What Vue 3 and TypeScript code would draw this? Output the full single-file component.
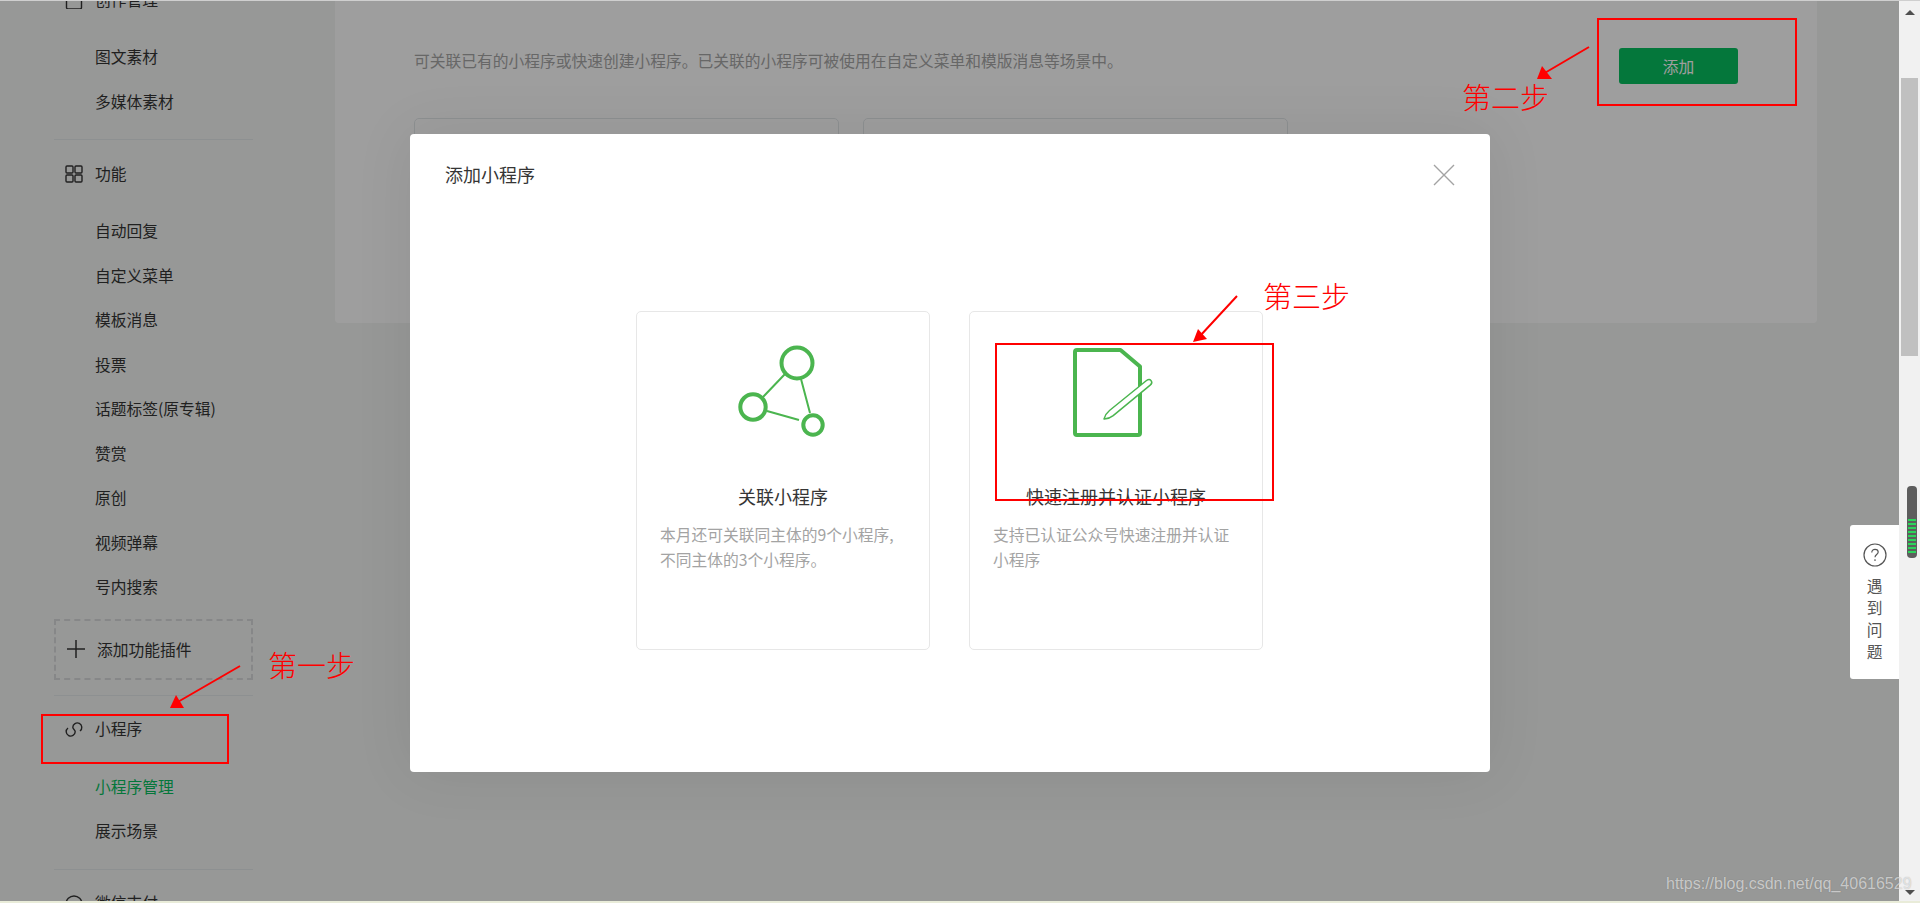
<script setup lang="ts">
interface MenuGroup {
  title: string
  icon: string
  items: string[]
  plugin?: boolean
}

const groups: MenuGroup[] = [
  { title: '创作管理', icon: 'doc', items: ['图文素材', '多媒体素材'] },
  {
    title: '功能',
    icon: 'grid',
    items: ['自动回复', '自定义菜单', '模板消息', '投票', '话题标签(原专辑)', '赞赏', '原创', '视频弹幕', '号内搜索'],
    plugin: true
  },
  { title: '小程序', icon: 'mini', items: ['小程序管理', '展示场景'] },
  { title: '微信支付', icon: 'pay', items: [] }
]

const stripes = [0, 1, 2, 3, 4, 5, 6, 7, 8]
const helpChars = ['遇', '到', '问', '题']
</script>

<template>
  <div class="page">
    <div class="top-line"></div>
    <div class="body">
      <div class="viewport">
        <aside class="sidebar">
          <section v-for="group in groups" :key="group.title" class="group">
            <div class="group-title">
              <svg class="group-icon" width="18" height="18" viewBox="0 0 18 18" fill="none" stroke="#353535" stroke-width="1.4">
                <template v-if="group.icon === 'doc'">
                  <rect x="1.5" y="0" width="15" height="18" rx="1.5" />
                  <path d="M7 9h4" />
                </template>
                <template v-else-if="group.icon === 'grid'">
                  <rect x="1" y="1" width="7" height="7" rx="1" />
                  <rect x="10" y="1" width="7" height="7" rx="1" />
                  <rect x="1" y="10" width="7" height="7" rx="1" />
                  <rect x="10" y="10" width="7" height="7" rx="1" />
                </template>
                <template v-else-if="group.icon === 'mini'">
                  <path d="M3 7A4.5 4.5 0 1 0 10.200 10.700C10.200 9 7.800 8 7.800 6.300A4.500 4.500 0 1 1 15 10" />
                </template>
                <template v-else>
                  <circle cx="9" cy="9" r="8" />
                  <path d="M5.500 9l2.500 2.500 5-5" />
                </template>
              </svg>
              <span>{{ group.title }}</span>
            </div>
            <a
              v-for="item in group.items"
              :key="item"
              class="menu-item"
              :class="{ active: item === '小程序管理' }"
            >{{ item }}</a>
            <div v-if="group.plugin" class="plugin">
              <svg width="18" height="18" viewBox="0 0 18 18" stroke="#353535" stroke-width="1.500">
                <path d="M0 9h18M9 0v18" />
              </svg>
              <span>添加功能插件</span>
            </div>
          </section>
        </aside>

        <main class="panel">
          <div class="panel-head">
            <p class="panel-desc">可关联已有的小程序或快速创建小程序。已关联的小程序可被使用在自定义菜单和模版消息等场景中。</p>
            <button class="add-btn">添加</button>
          </div>
          <div class="panel-cards">
            <div class="panel-card"></div>
            <div class="panel-card"></div>
          </div>
        </main>

        <div class="help">
          <svg width="24" height="24" viewBox="0 0 24 24" fill="none" stroke="#555" stroke-width="1.200">
            <circle cx="12" cy="12" r="11" />
            <path d="M8.800 9.400c0-1.900 1.400-3.100 3.200-3.100s3.200 1.100 3.200 2.800c0 2.400-3.200 2.500-3.200 5.100" />
            <path d="M12 16.300v1.800" />
          </svg>
          <div class="help-text">
            <span v-for="ch in helpChars" :key="ch">{{ ch }}</span>
          </div>
        </div>

        <div class="mask">
          <div class="modal">
            <header class="modal-head">
              <h2 class="modal-title">添加小程序</h2>
              <svg class="modal-close" width="22" height="22" viewBox="0 0 22 22" stroke="#a3a3a3" stroke-width="1.400">
                <path d="M1 1l20 20M21 1L1 21" />
              </svg>
            </header>
            <div class="modal-cards">
              <div class="option">
                <svg class="option-icon" width="120" height="100" viewBox="0 0 120 100" fill="none" stroke="#4bb54f">
                  <path d="M62 33L40 56M78 38l9 34M44 70l32 9" stroke-width="2" />
                  <circle cx="74" cy="22" r="15.500" stroke-width="4" />
                  <circle cx="30" cy="66" r="12.700" stroke-width="4" />
                  <circle cx="90" cy="84" r="9.700" stroke-width="4" />
                </svg>
                <h3 class="option-title">关联小程序</h3>
                <p class="option-desc">本月还可关联同主体的9个小程序,<br />不同主体的3个小程序。</p>
              </div>
              <div class="option">
                <svg class="option-icon" width="120" height="100" viewBox="0 0 120 100" fill="none" stroke="#4bb54f">
                  <path d="M19 11a2 2 0 0 1 2-2h43.500L84 25.500V92a2 2 0 0 1-2 2H21a2 2 0 0 1-2-2z" stroke-width="4" stroke-linejoin="round" />
                  <path d="M48 78c1-3.500 3-6.500 5.500-8.500l37-30c1.700-1.300 3.600-1.200 4.600.1 1 1.300.7 3.200-.9 4.500l-37 30.500c-2.600 2-5.900 3.500-9.200 3.400z" fill="#fff" stroke-width="1.500" stroke-linejoin="round" />
                </svg>
                <h3 class="option-title">快速注册并认证小程序</h3>
                <p class="option-desc">支持已认证公众号快速注册并认证小程序</p>
              </div>
            </div>
          </div>
        </div>
      </div>

      <div class="scrollbar">
        <span class="arrow-up"></span>
        <div class="thumb"></div>
        <span class="arrow-down"></span>
      </div>
    </div>
    <div class="bottom-line"></div>

    <!-- 标注层 -->
    <svg class="marks" width="1920" height="903" viewBox="0 0 1920 903" fill="none">
      <g stroke="#f00" stroke-width="2">
        <rect x="42" y="715" width="186" height="48" />
        <rect x="1598" y="19" width="198" height="86" />
        <rect x="996" y="344" width="277" height="156" />
        <path d="M240 666L176 703M1589 47L1543 74M1237 296L1200 336" />
      </g>
      <g fill="#f00">
        <path d="M170 708h14l-8-13z" />
        <path d="M1537 79h15l-10-13z" />
        <path d="M1193 342l14-3-9-10z" />
      </g>
    </svg>
    <span class="step step-one">第一步</span>
    <span class="step step-two">第二步</span>
    <span class="step step-three">第三步</span>

    <div class="gadget">
      <i v-for="n in stripes" :key="n"></i>
    </div>
    <span class="watermark">https://blog.csdn.net/qq_40616529</span>
  </div>
</template>

<style>
html, body { margin: 0; padding: 0; overflow: hidden; }
</style>

<style scoped>
.page { position: relative; width: 1920px; height: 903px; display: flex; flex-direction: column; overflow: hidden; background: #f4f5f4; font-family: "Noto Sans CJK SC", "Noto Sans", sans-serif; color: #353535; }
.top-line { height: 1px; background: #cfcfcf; }
.bottom-line { height: 2px; background: #e9ecd9; }
.body { flex: 1; min-height: 0; display: flex; }
.viewport { position: relative; flex: 1; min-width: 0; display: flex; align-items: flex-start; overflow: hidden; }

.sidebar { width: 199px; margin: -21px 82px 0 54px; flex-shrink: 0; }
.group { padding: 14px 0 15px; border-bottom: 1px solid #e4e8eb; }
.group:first-child { padding-top: 0; }
.group:last-child { border-bottom: none; }
.group-title { display: flex; align-items: center; gap: 12px; height: 40px; margin-bottom: 15px; padding-left: 11px; font-size: 15.750px; }
.group-title span { position: relative; top: -1px; }
.group-icon { flex-shrink: 0; }
.menu-item { display: block; height: 44.500px; line-height: 44.500px; padding-left: 41px; font-size: 15.750px; }
.menu-item.active { color: #07c160; }
.plugin { display: flex; align-items: center; gap: 12px; height: 57px; margin-top: 9px; padding-left: 11px; border: 2px dashed #d9dadb; font-size: 15.750px; }

.panel { width: 1482px; height: 322px; flex-shrink: 0; padding: 47px 79px 0; box-sizing: border-box; background: #fff; border-radius: 0 0 4px 4px; overflow: hidden; }
.panel-head { display: flex; justify-content: space-between; align-items: flex-start; }
.panel-desc { margin: 2px 0 0; font-size: 15.750px; line-height: 22px; color: #a6a6a6; }
.add-btn { width: 119px; height: 36px; padding: 0; border: none; border-radius: 3px; background: #07c160; color: #fff; font: inherit; font-size: 15.750px; }
.panel-cards { display: flex; gap: 24px; margin-top: 34px; }
.panel-card { width: 425px; height: 120px; box-sizing: border-box; border: 1px solid #e4e8eb; border-radius: 5px; }

.help { position: absolute; right: 0; top: 524px; width: 49px; height: 154px; padding-top: 18px; box-sizing: border-box; display: flex; flex-direction: column; align-items: center; background: #fff; border-radius: 3px 0 0 3px; z-index: 3; }
.help-text { display: flex; flex-direction: column; margin-top: 8px; font-size: 15.750px; line-height: 22px; color: #555; }

.mask { position: absolute; inset: 0; padding-top: 4px; box-sizing: border-box; display: flex; align-items: center; justify-content: center; background: rgba(0, 0, 0, 0.38); z-index: 2; }
.modal { width: 1080px; height: 638px; background: #fff; border-radius: 4px; box-shadow: 0 0 60px rgba(0, 0, 0, 0.08); }
.modal-head { display: flex; justify-content: space-between; align-items: center; padding: 27px 35px 0 35.500px; }
.modal-title { margin: 0 0 2px; font-size: 18px; font-weight: 400; line-height: 26px; color: #353535; }
.modal-cards { display: flex; justify-content: center; gap: 39px; margin-top: 122px; }
.option { width: 294px; height: 339px; box-sizing: border-box; padding: 29px 23px 0; border: 1px solid #e7e7e7; border-radius: 5px; text-align: center; }
.option-icon { display: block; margin: 0 auto; }
.option-title { margin: 42px 0 0; font-size: 18px; font-weight: 400; line-height: 26px; color: #353535; }
.option-desc { margin: 13px 0 0; font-size: 15.750px; line-height: 25px; color: #a3a3a3; text-align: left; }

.scrollbar { position: relative; width: 21px; flex-shrink: 0; background: #f1f1f1; display: flex; flex-direction: column; z-index: 3; }
.arrow-up { width: 0; height: 0; margin: 9px 0 0 6px; border-left: 5px solid transparent; border-right: 5px solid transparent; border-bottom: 5px solid #505050; }
.thumb { width: 17px; height: 278px; margin: 63px 0 0 2px; background: #c0c0c0; }
.arrow-down { width: 0; height: 0; margin: auto 0 6px 6px; border-left: 5px solid transparent; border-right: 5px solid transparent; border-top: 5px solid #505050; }

.marks { position: absolute; left: 0; top: 0; z-index: 5; pointer-events: none; }
.step { position: absolute; z-index: 5; font-family: "Noto Sans CJK SC", serif; font-size: 29px; line-height: 36px; font-weight: 300; color: #f00; white-space: nowrap; }
.step-one { left: 268px; top: 646px; }
.step-two { left: 1462px; top: 78px; }
.step-three { left: 1263px; top: 277px; }

.gadget { position: absolute; left: 1907px; top: 486px; width: 10px; height: 72px; padding: 33px 1px 0; box-sizing: border-box; display: flex; flex-direction: column; gap: 2px; background: #5d5d5d; border-radius: 4px; z-index: 6; }
.gadget i { display: block; height: 2px; background: #2bd45a; }

.watermark { position: absolute; left: 1666px; top: 874px; z-index: 7; font-family: "Liberation Sans", Arial, sans-serif; font-size: 16px; line-height: 20px; color: rgba(255, 255, 255, 0.6); text-shadow: 0 0 1px rgba(60, 60, 60, 0.4); white-space: nowrap; }
</style>
